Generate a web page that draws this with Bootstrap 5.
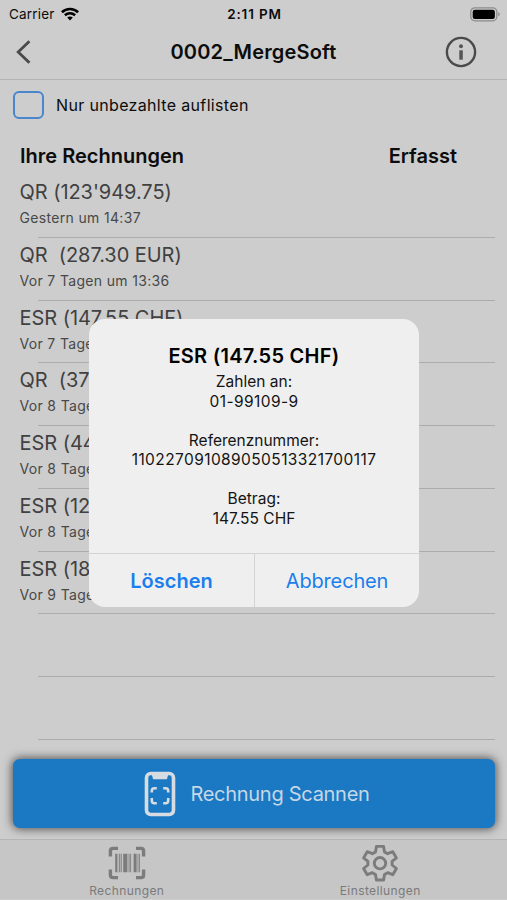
<!DOCTYPE html>
<html lang="de">
<head>
<meta charset="utf-8">
<meta name="viewport" content="width=device-width, initial-scale=1">
<title>0002_MergeSoft</title>
<link rel="stylesheet" href="https://cdn.jsdelivr.net/npm/bootstrap@5.3.0/dist/css/bootstrap.min.css">
<style>
body{font-family:Inter,"Liberation Sans",sans-serif;background:#cdcdcd;color:#0c0c0c;height:900px;overflow:hidden}
.phone{height:900px}
.status{height:28px;font-size:13.5px;line-height:28px}
.status .carrier{padding-left:9px;letter-spacing:.2px}
.status .clock{font-weight:600;letter-spacing:.85px}
.status .power{padding-right:7px}
.topbar{height:52px;border-bottom:1px solid #b4b4b4;padding:0 30px 3px 14px}
.topbar h1{font-size:20px;font-weight:600;letter-spacing:.18px}
.side{width:50px}
.side-end{width:34px}
.filter{height:50px;padding:0 0 1px 13px;gap:12px;font-size:16px;letter-spacing:.34px}
.tick{width:31px;height:28px;border:2px solid #4a86cc;border-radius:6px}
.heads{height:45px;padding:10px 50px 0 20px;font-size:20px;font-weight:600;line-height:32px}
.entry{height:62.75px;padding-left:19.5px;color:#414141}
.entry::after{content:"";display:block;margin-left:18.5px;margin-right:12px;height:1px;background:#acacac}
.entry-in{height:61.75px;padding-top:4px}
.entry-t{font-size:20px;line-height:27px;white-space:pre;letter-spacing:-.05px}
.entry-s{font-size:14px;line-height:24px;color:#484848;letter-spacing:.33px}
.dock{top:759px;left:0;right:0;height:141px;padding:0 12px 0 13px}
.scan{height:69px;border-radius:7px;background:#1b79c4;color:#c6d7e6;font-size:20px;letter-spacing:-.28px;gap:14px;padding-left:6px;box-shadow:0 0 10px 1px #4f4f4f}
.tabs{height:60px;background:#c6c6c6;border-top:1px solid #b5b5b5;margin:11px -12px 0 -13px;position:relative;color:#7a7a7a;font-size:12px;letter-spacing:.4px}
.tab-item{padding-top:3px}
.tab-item span{line-height:14px;margin-top:1px}
.alertbox{left:89px;top:319px;width:330px;height:288px;border-radius:16px;background:#efefef;overflow:hidden}
.alert-text{height:235px;padding-top:23px;font-size:15.5px;line-height:19.55px;border-bottom:1px solid #d3d3d3;color:#141414}
.alert-text h2{font-size:20px;line-height:28px;font-weight:600;margin:0 0 2px;color:#000;letter-spacing:.28px}
.wide{letter-spacing:.41px}
.act{font-size:20px;color:#1a7eec;background:none;border:0;padding:1px 0 0}
.act+.act{border-left:1px solid #d3d3d3;letter-spacing:-.15px}
</style>
</head>
<body>
<div class="phone position-relative d-flex flex-column overflow-hidden">
  <div class="status row g-0">
    <div class="col d-flex align-items-center carrier">Carrier
      <svg style="margin-left:6px" width="18" height="14" viewBox="0 0 18 14" fill="none" stroke="#000" stroke-width="2.6"><path d="M.9 5.2C5.4.9 12.6.9 17.1 5.2M3.9 8.2c2.9-2.7 7.3-2.7 10.2 0"/><path d="M9 13.4 6.2 10.6c1.6-1.5 4-1.5 5.6 0z" fill="#000" stroke="none"/></svg>
    </div>
    <div class="col-auto clock">2:11 PM</div>
    <div class="col d-flex align-items-center justify-content-end power">
      <svg width="30" height="15" viewBox="0 0 30 15"><rect x=".8" y=".8" width="26" height="13" rx="4" fill="none" stroke="#8c8c8c" stroke-width="1.3"/><rect x="2.7" y="2.7" width="22.2" height="9.2" rx="2.2"/><path d="M28.2 5v4.6q1.5-.8 1.5-2.3T28.2 5z" fill="#8c8c8c"/></svg>
    </div>
  </div>

  <header class="topbar d-flex align-items-center justify-content-between">
    <div class="side"><svg class="d-block" width="20" height="26" viewBox="0 0 20 26" fill="none" stroke="#4a4a4a" stroke-width="2.8"><path d="M15.4 2.2 4.2 13l11.2 10.8"/></svg></div>
    <h1 class="m-0">0002_MergeSoft</h1>
    <div class="side-end d-flex justify-content-end"><svg width="32" height="32" viewBox="0 0 32 32"><circle cx="16" cy="16" r="14.1" fill="none" stroke="#4a4a4a" stroke-width="2.4"/><circle cx="16" cy="10.2" r="2" fill="#555"/><path d="M14.3 14.3h3.5v9.4h-3.5z" fill="#555"/></svg></div>
  </header>

  <label class="filter d-flex align-items-center"><span class="tick"></span><span>Nur unbezahlte auflisten</span></label>

  <div class="heads d-flex justify-content-between"><span>Ihre Rechnungen</span><span>Erfasst</span></div>

  <div class="entries">
    <div class="entry"><div class="entry-in"><div class="entry-t">QR (123'949.75)</div><div class="entry-s">Gestern um 14:37</div></div></div>
    <div class="entry"><div class="entry-in"><div class="entry-t">QR  (287.30 EUR)</div><div class="entry-s">Vor 7 Tagen um 13:36</div></div></div>
    <div class="entry"><div class="entry-in"><div class="entry-t">ESR (147.55 CHF)</div><div class="entry-s">Vor 7 Tage</div></div></div>
    <div class="entry"><div class="entry-in"><div class="entry-t">QR  (37</div><div class="entry-s">Vor 8 Tage</div></div></div>
    <div class="entry"><div class="entry-in"><div class="entry-t">ESR (44</div><div class="entry-s">Vor 8 Tage</div></div></div>
    <div class="entry"><div class="entry-in"><div class="entry-t">ESR (12</div><div class="entry-s">Vor 8 Tage</div></div></div>
    <div class="entry"><div class="entry-in"><div class="entry-t">ESR (18</div><div class="entry-s">Vor 9 Tage</div></div></div>
    <div class="entry"><div class="entry-in"></div></div>
    <div class="entry"><div class="entry-in"></div></div>
  </div>

  <div class="dock position-absolute">
    <div class="scan d-flex align-items-center justify-content-center">
      <svg width="32" height="46" viewBox="0 0 32 46" fill="none" stroke="#d6dce1"><rect x="2.5" y="2.5" width="27" height="41" rx="4.2" stroke-width="3.6"/><path d="M7.500 2.500h17l-1.600 5.800H9.100z" fill="#d6dce1" stroke="none"/><path d="M7.800 21.500v-1.700q0-2.600 2.600-2.600h2.400M19.200 17.200h2.400q2.600 0 2.600 2.600v1.700M24.200 27v2.400q0 2.800-2.600 2.800h-2.400M12.800 32.200h-2.400q-2.600 0-2.600-2.800V27" stroke-width="2.600"/></svg>
      <span>Rechnung Scannen</span>
    </div>
    <nav class="tabs row g-0 text-center">
      <div class="col-6 tab-item d-flex flex-column align-items-center">
        <svg width="38" height="40" viewBox="0 0 38 40" fill="none" stroke="#7c7c7c"><path d="M2.400 13.500V8q0-2.600 2.600-2.600h5M28 5.400h5q2.600 0 2.600 2.600v5.500M35.600 26.500V32q0 2.600-2.600 2.600h-5M10 34.600H5Q2.400 34.600 2.400 32v-5.500" stroke-width="3.400"/><g fill="#7c7c7c" stroke="none"><path d="M7.200 10.700h2.200v18.600H7.200zM10.800 10.700h1v18.600h-1zM12.700 10.700h1v18.600h-1zM15.200 10.700h4.200v18.600h-4.200zM20.600 10.700h.9v18.600h-.9zM22.200 10.700h.9v18.600h-.9zM25.600 10.700h3v18.600h-3zM29.600 10.700h.8v18.600h-.8zM31.200 10.700h.8v18.600h-.8z"/></g></svg>
        <span>Rechnungen</span>
      </div>
      <div class="col-6 tab-item d-flex flex-column align-items-center">
        <svg width="38" height="40" viewBox="0 0 38 40" fill="none" stroke="#7c7c7c" stroke-width="2.900" stroke-linejoin="round"><path d="M15.400 3.400h7.200l.9 5.500 3.100 1.800 5.200-2 3.600 6.200-4.300 3.500v3.600l4.300 3.500-3.600 6.200-5.200-2-3.100 1.800-.9 5.500h-7.200l-.9-5.500-3.100-1.800-5.200 2-3.600-6.200 4.300-3.500v-3.600l-4.300-3.500 3.600-6.200 5.200 2 3.100-1.800z"/><circle cx="19" cy="20.200" r="5.700"/></svg>
        <span>Einstellungen</span>
      </div>
    </nav>
  </div>

  <div class="alertbox position-absolute d-flex flex-column" role="alertdialog" aria-modal="true">
    <div class="alert-text text-center">
      <h2>ESR (147.55 CHF)</h2>
      <div>Zahlen an:<br><span class="wide">01-99109-9</span><br><br>Referenznummer:<br><span class="wide">110227091089050513321700117</span><br><br>Betrag:<br>147.55 CHF</div>
    </div>
    <div class="d-flex flex-grow-1">
      <button class="act w-50 fw-semibold" type="button">Löschen</button>
      <button class="act w-50" type="button">Abbrechen</button>
    </div>
  </div>
</div>
<script src="https://cdn.jsdelivr.net/npm/bootstrap@5.3.0/dist/js/bootstrap.bundle.min.js"></script>
</body>
</html>
